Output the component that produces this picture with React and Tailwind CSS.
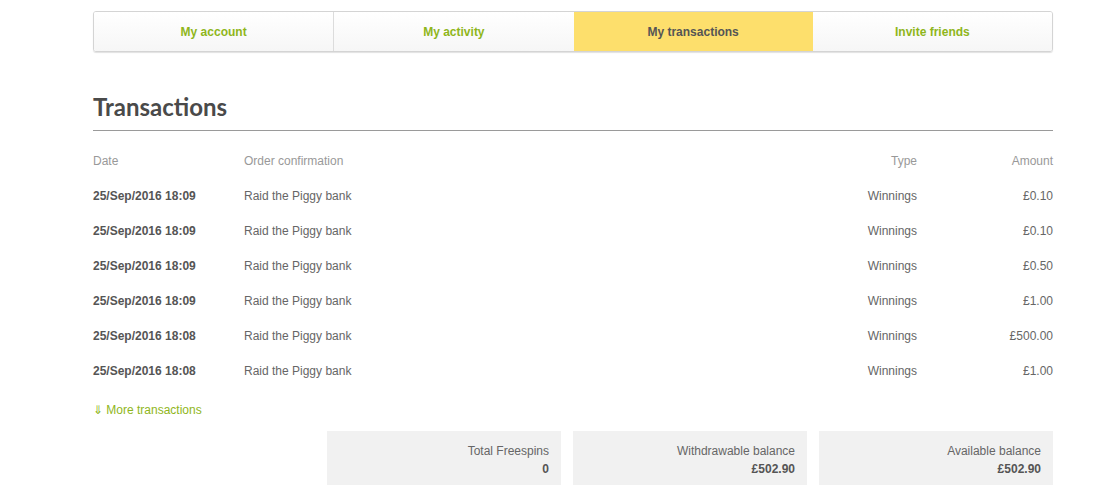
import React from 'react'

const tabs = [
  { label: 'My account' },
  { label: 'My activity' },
  { label: 'My transactions', active: true },
  { label: 'Invite friends' },
]

const rows = [
  { date: '25/Sep/2016 18:09', amount: '£0.10' },
  { date: '25/Sep/2016 18:09', amount: '£0.10' },
  { date: '25/Sep/2016 18:09', amount: '£0.50' },
  { date: '25/Sep/2016 18:09', amount: '£1.00' },
  { date: '25/Sep/2016 18:08', amount: '£500.00' },
  { date: '25/Sep/2016 18:08', amount: '£1.00' },
]

const balances = [
  { label: 'Total Freespins', value: '0' },
  { label: 'Withdrawable balance', value: '£502.90' },
  { label: 'Available balance', value: '£502.90' },
]

const App = () => {
  return (
    <div className="min-h-screen bg-white font-['Liberation_Sans',Arial,sans-serif] text-[12px]">
      <div className="w-[960px] ml-[93px] pt-[11px]">
        {/* Tabs */}
        <nav className="flex h-[41px] rounded-[3px] border border-[#d4d4d4] shadow-[0_1px_1px_rgba(0,0,0,0.12)] overflow-hidden">
          {tabs.map((tab, idx) => (
            <div
              key={tab.label}
              className={
                tab.active
                  ? 'flex-1 flex items-center justify-center font-bold bg-[#fddf6c] text-[#555] border-t border-[#cdb660] -mt-px'
                  : 'flex-1 flex items-center justify-center font-bold bg-gradient-to-b from-white to-[#f6f6f6] text-[#8fb61b]' +
                    (idx > 0 && !tabs[idx - 1].active ? ' border-l border-[#dcdcdc]' : '')
              }
            >
              {tab.label}
            </div>
          ))}
        </nav>

        {/* Heading */}
        <h1 className="mt-[40px] pb-[8px] border-b border-[#9a9a9a] font-['Lato',sans-serif] font-bold text-[24px] leading-[30px] text-[#4a4a4a]">
          Transactions
        </h1>

        {/* Table */}
        <div className="mt-[12px]">
          <div className="flex h-[35px] items-center text-[#999]">
            <div className="w-[151px]">Date</div>
            <div className="flex-1">Order confirmation</div>
            <div className="w-[120px] text-right">Type</div>
            <div className="w-[136px] text-right">Amount</div>
          </div>
          {rows.map((row, idx) => (
            <div key={idx} className="flex h-[35px] items-center text-[#666]">
              <div className="w-[151px] font-bold text-[#555]">{row.date}</div>
              <div className="flex-1">Raid the Piggy bank</div>
              <div className="w-[120px] text-right">Winnings</div>
              <div className="w-[136px] text-right">{row.amount}</div>
            </div>
          ))}
        </div>

        <div className="h-[43px] flex items-center">
          <a className="text-[#8fb61b] cursor-pointer">⇓ More transactions</a>
        </div>

        {/* Balances */}
        <div className="flex justify-end gap-[12px]">
          {balances.map((b) => (
            <div key={b.label} className="w-[234px] h-[64px] bg-[#f1f1f1] pt-[13px] pr-[12px] text-right">
              <div className="leading-[14px] text-[#666]">{b.label}</div>
              <div className="mt-[4px] leading-[14px] font-bold text-[#555]">{b.value}</div>
            </div>
          ))}
        </div>
      </div>
    </div>
  )
}

export default App
